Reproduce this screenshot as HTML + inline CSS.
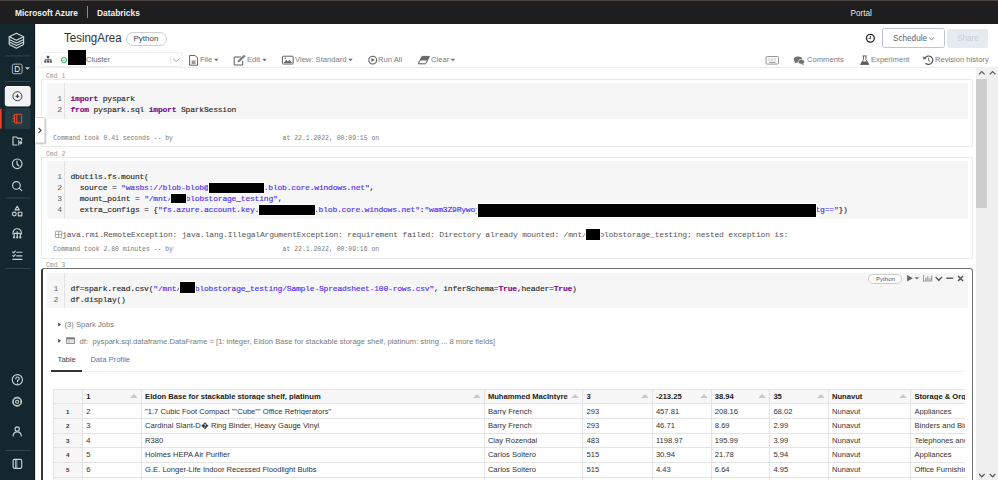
<!DOCTYPE html>
<html><head><meta charset="utf-8">
<style>
*{margin:0;padding:0;box-sizing:border-box}
html,body{width:998px;height:480px;overflow:hidden;background:#fff;font-family:"Liberation Sans",sans-serif;color:#333}
.a{position:absolute;white-space:pre}
.m{font-family:"Liberation Mono",monospace}
#top{position:absolute;left:0;top:0;width:998px;height:24px;background:#1e1e1e;border-top:1px solid #4a4540}
#side{position:absolute;left:0;top:24px;width:35px;height:456px;background:#15272e;border-right:1px solid #0c1b21}
.sep{position:absolute;left:5px;width:26px;height:1px;background:#34454c}
.tb{color:#7c7c7c;font-size:8.1px;line-height:8.1px;transform:scaleX(0.94);transform-origin:0 0}
.cell{position:absolute;left:41px;width:931.5px;border:1px solid #e9e9e9;border-radius:2px;background:#fff}
.code{position:absolute;left:46.5px;width:921.5px;background:#f6f6f6}
.gut{position:absolute;left:64px;width:1px;background:#e2e2e2}
.ln{color:#666;font-size:8px;line-height:8px}
.cd{color:#2a2a2a;font-size:8px;line-height:8px;letter-spacing:-0.2px;-webkit-text-stroke:0.15px currentColor}
.kw{color:#7a0f87;font-weight:bold}
.st{color:#4f30f2}
.bk{background:#000;position:absolute;box-shadow:0 0 0 0.9px #fff}
.cmd{color:#999;font-size:6.45px;line-height:6.45px}
.took{color:#7a7a7a;font-size:6.45px;line-height:6.45px}
</style></head><body>
<div id="top">
  <div class="a" style="left:15px;top:8.2px;font-size:8.4px;line-height:8.4px;font-weight:bold;color:#f2f2f2">Microsoft Azure</div>
  <div class="a" style="left:87px;top:5px;width:1px;height:12px;background:#8a8a8a"></div>
  <div class="a" style="left:97px;top:8.2px;font-size:8.4px;line-height:8.4px;font-weight:bold;color:#f2f2f2">Databricks</div>
  <div class="a" style="left:850.5px;top:8.5px;font-size:8.2px;line-height:8.2px;color:#e8e8e8">Portal</div>
</div>
<div id="side"></div>
<svg class="a" style="left:0;top:0" width="35" height="480" viewBox="0 0 35 480">
 <g fill="none" stroke="#d2d7da" stroke-width="1.15" stroke-linejoin="round">
  <!-- databricks logo -->
  <path d="M16.4 33.2 L23.6 36.7 L16.4 40.2 L9.2 36.7 Z"/>
  <path d="M9.2 39.4 L16.4 42.9 L23.6 39.4"/>
  <path d="M9.2 42 L16.4 45.5 L23.6 42"/>
  <path d="M9.2 44.6 L16.4 48.2 L23.6 44.6"/>
  <path d="M9.2 36.7 V44.6 M23.6 36.7 V44.6"/>
 </g>
 <rect x="5" y="55.5" width="25.5" height="0.8" fill="#3b4c53"/>
 <rect x="5" y="81" width="25.5" height="0.8" fill="#3b4c53"/>
 <rect x="5" y="197.6" width="25.5" height="0.8" fill="#3b4c53"/>
 <rect x="5" y="268" width="25.5" height="0.8" fill="#3b4c53"/>
 <rect x="5" y="450" width="25.5" height="0.8" fill="#3b4c53"/>
 <!-- D box -->
 <rect x="12.3" y="64.1" width="9.8" height="9.6" rx="1.6" fill="none" stroke="#b9c2c6" stroke-width="0.9"/>
 <text x="14.3" y="72.2" font-family="Liberation Sans" font-size="8.2" fill="#f4f4f4">D</text>
 <path d="M25 67.2 H30 L27.5 69.8 Z" fill="#c9d0d3"/>
 <!-- + button -->
 <rect x="5.3" y="86.5" width="24.8" height="19.4" rx="1.8" fill="#f1f2f4" stroke="#fff" stroke-width="1"/>
 <circle cx="17.4" cy="96.2" r="4.5" fill="none" stroke="#2c2c2c" stroke-width="0.9"/>
 <path d="M17.4 94.3 V98.1 M15.5 96.2 H19.3" stroke="#2c2c2c" stroke-width="1.1"/>
 <!-- active notebook -->
 <rect x="4.8" y="108.3" width="25.8" height="20.6" rx="2" fill="#233a42"/>
 <rect x="0" y="108.8" width="1.6" height="19.8" fill="#e8452b"/>
 <g fill="none" stroke="#e8452b" stroke-width="1.1">
  <rect x="14.6" y="114.3" width="7" height="8.6" rx="0.8"/>
  <path d="M12.6 116 H14.6 M12.6 118.6 H14.6 M12.6 121.2 H14.6 M16.8 114.3 V122.9"/>
 </g>
 <g fill="none" stroke="#c9d0d3" stroke-width="1.15" stroke-linecap="round" stroke-linejoin="round">
  <!-- folder -->
  <path d="M13 137 H16.6 L17.8 138.4 H21.6 V140.2 M13 137 V145 H17"/>
  <path d="M18.8 140.6 V144.8 M18.8 142.7 H21.8 M20.6 141.4 L21.8 142.7 L20.6 144"/>
  <!-- clock -->
  <circle cx="17.2" cy="163.8" r="4.8"/>
  <path d="M17 161 V164.2 L19 166"/>
  <!-- search -->
  <circle cx="16.4" cy="185.4" r="3.8"/>
  <path d="M19.2 188.2 L21.8 190.6"/>
  <!-- shapes -->
  <path d="M17.2 206.2 L19.3 209.8 H15.1 Z"/>
  <circle cx="14.3" cy="214" r="1.9"/>
  <rect x="18.3" y="212.2" width="3.5" height="3.6"/>
  <!-- cluster -->
  <path d="M12.9 234 Q12.9 228.7 17.2 228.7 Q21.5 228.7 21.5 234"/>
  <path d="M14.1 233.4 H20.3 M14.1 233.4 V236.4 M17.2 231.6 V236.4 M20.3 233.4 V236.4"/>
  <circle cx="14.1" cy="237.4" r="1.1" fill="#c9d0d3" stroke="none"/>
  <circle cx="17.2" cy="237.4" r="1.1" fill="#c9d0d3" stroke="none"/>
  <circle cx="20.3" cy="237.4" r="1.1" fill="#c9d0d3" stroke="none"/>
  <!-- checklist -->
  <path d="M12.8 252 L13.7 252.9 L15.3 251 M16.8 252.2 H22 M12.8 255.6 L13.7 256.5 L15.3 254.6 M16.8 255.8 H22 M12.8 259.3 H22"/>
  <!-- help -->
  <circle cx="17.35" cy="379.7" r="5.1"/>
  <path d="M15.8 378.8 Q15.8 377 17.5 377 Q19.2 377 19.2 378.7 Q19.2 379.8 17.5 380.6 V381.6"/>
  <!-- gear -->
  <circle cx="17.1" cy="401.7" r="3.9"/>
  <circle cx="17.1" cy="401.7" r="4.6" stroke-dasharray="1.6 0.8" stroke-width="0.8"/>
  <circle cx="17.1" cy="401.7" r="1.5"/>
  <!-- person -->
  <circle cx="17.2" cy="428.9" r="2.1"/>
  <path d="M13.2 436 Q13.2 431.8 17.2 431.8 Q21.2 431.8 21.2 436"/>
  <!-- panel -->
  <rect x="13.1" y="459.4" width="8.6" height="8.9" rx="1.2"/>
  <path d="M15.4 459.2 V468.4 M16.8 459.2 V468.4" stroke-width="0.8"/>
 </g>
 <circle cx="17.4" cy="380.2" r="0.1" fill="#fff"/>
 <circle cx="17.5" cy="383.3" r="0.55" fill="#c9d0d3"/>
</svg>

<div class="a" style="left:35px;top:24px;width:1px;height:456px;background:#e4e4e4"></div>
<!-- title row -->
<div class="a" style="left:64.2px;top:31.6px;font-size:12.3px;line-height:12.3px;color:#333;transform:scaleX(0.935);transform-origin:0 0">TesingArea</div>
<div class="a" style="left:126px;top:31.5px;width:41px;height:14px;border:1px solid #cfcfcf;border-radius:7px"></div>
<div class="a" style="left:133.5px;top:34.5px;font-size:8px;line-height:8px;color:#444">Python</div>

<!-- toolbar -->
<div class="a" style="left:41px;top:52.3px;width:142px;height:14.5px;border:1px solid #ededed;border-radius:3px"></div>
<svg class="a" style="left:0;top:0" width="998" height="70" viewBox="0 0 998 70">
 <!-- cluster hierarchy icon -->
 <g fill="#4a4a4a">
  <rect x="46.8" y="55.8" width="2.4" height="2.2"/>
  <rect x="47.7" y="57.8" width="0.7" height="1.6"/>
  <rect x="45" y="59" width="6.4" height="0.7"/>
  <rect x="44.2" y="60.4" width="2.2" height="2.2"/>
  <rect x="46.9" y="60.4" width="2.2" height="2.2"/>
  <rect x="49.6" y="60.4" width="2.2" height="2.2"/>
 </g>
 <circle cx="64" cy="60" r="2.5" fill="none" stroke="#3cc06a" stroke-width="1.1"/>
 <path d="M62.9 60 L63.7 60.8 L65.2 59.3" fill="none" stroke="#3cc06a" stroke-width="0.9"/>
 <rect x="170.3" y="57.2" width="0.6" height="5.8" fill="#d0d0d0"/>
 <path d="M173 58.6 L176.2 61.6 L179.4 58.6" fill="none" stroke="#9a9a9a" stroke-width="0.9"/>
 <g fill="none" stroke="#5e5e5e" stroke-width="1">
  <!-- file -->
  <path d="M189.6 55.4 H195 L197.6 58 V65.2 H189.6 Z"/>
  <rect x="191.6" y="60.4" width="4" height="3.6" fill="#9a9a9a" stroke="none"/>
  <!-- edit -->
  <path d="M241.2 57 H234.2 V65 H242.6 V60.8"/>
  <path d="M237.6 62.2 L238 60.6 L244.2 54.8 L245.6 56.2 L239.4 62 Z" fill="#7a7a7a" stroke="none"/>
  <!-- view -->
  <rect x="282.4" y="56.2" width="10.8" height="7.8" rx="0.8"/>
  <path d="M283.6 63 L286.2 59.8 L288 61.4 L289.6 59.8 L292.2 63 Z" fill="#6a6a6a" stroke="none"/>
  <circle cx="285.2" cy="58.2" r="0.8" fill="#6a6a6a" stroke="none"/>
  <!-- run all -->
  <circle cx="372.7" cy="60.1" r="3.9" stroke-width="1.1"/>
  <path d="M371.4 58.1 L374.8 60.1 L371.4 62.1 Z" fill="#6a6a6a" stroke="none"/>
  <!-- clear -->
  <path d="M422 56.4 H429.4 L425.6 63.8 H418.2 Z"/>
  <path d="M422 56.4 H429.4 L427.2 60.6 H419.8 Z" fill="#6a6a6a" stroke="none"/>
  <!-- keyboard -->
  <rect x="766" y="56.5" width="12.6" height="7.6" rx="1.2" stroke="#8c8c8c" stroke-width="0.9" fill="#fafafa"/>
  <path d="M768.2 59 H776.6" stroke="#9a9a9a" stroke-width="0.8" stroke-dasharray="0.7 0.7"/>
  <path d="M768.2 60.6 H776.6" stroke="#b0b0b0" stroke-width="0.7" stroke-dasharray="0.7 0.7"/>
  <path d="M769.2 62.4 H775.6" stroke="#808080" stroke-width="0.8"/>
 </g>
 <g fill="#6f6f6f">
  <path d="M214 58.8 H218.6 L216.3 61.2 Z"/>
  <path d="M262.2 58.8 H266.8 L264.5 61.2 Z"/>
  <path d="M348.2 58.8 H352.8 L350.5 61.2 Z"/>
  <path d="M450.6 58.8 H455.2 L452.9 61.2 Z"/>
  <!-- comments -->
  <ellipse cx="798" cy="59.4" rx="4.2" ry="3"/>
  <path d="M795.4 61.6 L794.2 63.4 L797.6 62.2 Z"/>
  <ellipse cx="801.4" cy="61.8" rx="3.2" ry="2.4" stroke="#fff" stroke-width="0.6"/>
  <path d="M803 63.6 L804.4 65.2 L801.6 64 Z"/>
  <!-- experiment flask -->
  <path d="M862.6 55.9 H866.8 M863.5 56 V59.6 L860.6 64.4 H868.8 L865.9 59.6 V56" fill="none" stroke="#5a5a5a" stroke-width="0.9" stroke-linejoin="round"/>
  <path d="M862.2 61.6 H867.2 L868.8 64.4 H860.6 Z" fill="#5a5a5a"/>
 </g>
 <!-- revision history -->
 <g fill="none" stroke="#555" stroke-width="1.2">
  <path d="M925 58 A4.2 4.2 0 1 1 925.6 63.2"/>
  <path d="M928.6 57.8 V60.4 L930.4 61.6" stroke-width="0.9"/>
 </g>
 <path d="M923.2 56.2 L926.6 58.8 L923.2 59.6 Z" fill="#555"/>
 <!-- clock (title row) -->
 <circle cx="870.4" cy="38.3" r="3.9" fill="none" stroke="#222" stroke-width="1.3"/>
 <path d="M870.4 36 V38.6 H868.6" fill="none" stroke="#222" stroke-width="0.9"/>
 <!-- schedule chevron -->
 <path d="M929.4 37.8 L931.6 39.8 L933.8 37.8" fill="none" stroke="#666" stroke-width="0.9"/>
</svg>
<div class="a" style="left:67.5px;top:50.4px;width:18px;height:15px;background:#000"></div>
<div class="a tb" style="left:86px;top:55.8px;color:#666">Cluster</div>
<div class="a tb" style="left:199.6px;top:55.8px">File</div>
<div class="a tb" style="left:247.4px;top:55.8px">Edit</div>
<div class="a tb" style="left:294.9px;top:55.8px">View: Standard</div>
<div class="a tb" style="left:378.3px;top:55.8px">Run All</div>
<div class="a tb" style="left:431.2px;top:55.8px">Clear</div>
<div class="a tb" style="left:806.6px;top:55.8px">Comments</div>
<div class="a tb" style="left:870.6px;top:55.8px">Experiment</div>
<div class="a tb" style="left:935px;top:55.8px">Revision history</div>
<div class="a" style="left:882.2px;top:28.3px;width:62.4px;height:19.3px;border:1px solid #bcc6d0;border-radius:2.5px"></div>
<div class="a" style="left:892.9px;top:34.3px;font-size:8.6px;line-height:8.6px;color:#5b6570;transform:scaleX(0.95);transform-origin:0 0">Schedule</div>
<div class="a" style="left:946.7px;top:29px;width:41.6px;height:18.6px;background:#e6ebf0;border-radius:2.5px"></div>
<div class="a" style="left:957.1px;top:34.3px;font-size:8.6px;line-height:8.6px;color:#c8d0d8;transform:scaleX(0.95);transform-origin:0 0">Share</div>
<!-- toolbar bottom line -->
<div class="a" style="left:35px;top:67px;width:941px;height:1px;background:#ececec"></div>

<!-- scrollbar -->
<div class="a" style="left:976px;top:67px;width:22px;height:413px;background:#f0f0f0"></div>
<div class="a" style="left:976px;top:79px;width:11px;height:129px;background:#cdcdcd"></div>

<!-- cells -->
<div class="a cmd m" style="left:46px;top:73.9px">Cmd 1</div>
<div class="cell" style="top:79px;height:67.5px"></div>
<div class="code" style="top:82.5px;height:36px"></div>
<div class="gut" style="top:82.5px;height:36px"></div>

<div class="a cmd m" style="left:46px;top:152.4px">Cmd 2</div>
<div class="cell" style="top:157px;height:101.5px"></div>
<div class="code" style="top:160.5px;height:58.5px"></div>
<div class="gut" style="top:160.5px;height:58.5px"></div>

<div class="a cmd m" style="left:46px;top:263.4px">Cmd 3</div>
<div class="cell" style="top:268px;height:240px;border:1.2px solid #707070;border-left:2.2px solid #3a3a3a;border-radius:3px"></div>
<div class="code" style="top:272.5px;height:35.6px"></div>
<div class="gut" style="top:272.5px;height:35.6px"></div>

<!-- cell contents -->
<div class="a m ln" style="left:57.3px;top:94.77px;">1</div>
<div class="a m ln" style="left:57.3px;top:106.27px;">2</div>
<div class="a m cd" style="left:70.5px;top:94.77px;"><span class="kw">import</span> pyspark</div>
<div class="a m cd" style="left:70.5px;top:106.27px;"><span class="kw">from</span> pyspark.sql <span class="kw">import</span> SparkSession</div>
<div class="a m took" style="left:53.2px;top:135.56px;">Command took 0.41 seconds -- by</div>
<div class="a m took" style="left:282.6px;top:135.56px;">at 22.1.2022, 00:09:15 on</div>
<div class="a m ln" style="left:57.3px;top:173.47px;">1</div>
<div class="a m ln" style="left:57.3px;top:184.07px;">2</div>
<div class="a m ln" style="left:57.3px;top:195.07px;">3</div>
<div class="a m ln" style="left:57.3px;top:206.47px;">4</div>
<div class="a m cd" style="left:70.5px;top:173.47px;">dbutils.fs.mount(</div>
<div class="a m cd" style="left:70.5px;top:184.07px;">  source = <span class="st">"wasbs://blob-blob@</span></div>
<div class="a m cd" style="left:263.7px;top:184.07px;"><span class="st">.blob.core.windows.net"</span>,</div>
<div class="a m cd" style="left:70.5px;top:195.07px;">  mount_point = <span class="st">"/mnt/</span></div>
<div class="a m cd" style="left:185.6px;top:195.07px;"><span class="st">blobstorage_testing"</span>,</div>
<div class="a m cd" style="left:70.5px;top:206.47px;">  extra_configs = {<span class="st">"fs.azure.account.key.</span></div>
<div class="a m cd" style="left:314.0px;top:206.47px;"><span class="st">.blob.core.windows.net"</span>:<span class="st">"wam3Z9Rywoj</span></div>
<div class="a m cd" style="left:815.5px;top:206.47px;"><span class="st">tg=="</span>})</div>
<div class="bk" style="left:209.3px;top:183.1px;width:54.5px;height:10.2px"></div>
<div class="bk" style="left:171.2px;top:193.7px;width:15.1px;height:9.3px"></div>
<div class="bk" style="left:259.2px;top:205.2px;width:56.3px;height:9.7px"></div>
<div class="bk" style="left:477.6px;top:203.5px;width:338.4px;height:13.3px"></div>
<div class="a m cd" style="left:62.1px;top:230.97px;color:#555;-webkit-text-stroke:0">java.rmi.RemoteException: java.lang.IllegalArgumentException: requirement failed: Directory already mounted: /mnt/</div>
<div class="a m cd" style="left:599.5px;top:230.97px;color:#555;-webkit-text-stroke:0">blobstorage_testing; nested exception is:</div>
<div class="bk" style="left:585.9px;top:229.3px;width:14.2px;height:10.5px"></div>
<div class="a m took" style="left:53.2px;top:246.76px;">Command took 2.80 minutes -- by</div>
<div class="a m took" style="left:282.6px;top:246.76px;">at 22.1.2022, 00:09:16 on</div>
<div class="a m ln" style="left:53.4px;top:285.37px;">1</div>
<div class="a m ln" style="left:53.4px;top:296.32px;">2</div>
<div class="a m cd" style="left:70.5px;top:285.37px;">df=spark.read.csv(<span class="st">"/mnt/</span></div>
<div class="a m cd" style="left:194.8px;top:285.37px;"><span class="st">blobstorage_testing/Sample-Spreadsheet-100-rows.csv"</span>, inferSchema=<span class="kw">True</span>,header=<span class="kw">True</span>)</div>
<div class="a m cd" style="left:70.5px;top:296.32px;">df.display()</div>
<div class="bk" style="left:180px;top:282px;width:14.8px;height:11.0px"></div>
<!-- part3 -->
<div class="a" style="left:35px;top:117.2px;width:10.00px;height:25.80px;background:#fff;border:1px solid #e2e2e2;border-left:none;box-shadow:1px 1px 1.5px rgba(0,0,0,0.25)"></div>
<svg class="a" style="left:0;top:0" width="998" height="480" viewBox="0 0 998 480">
 <path d="M38.6 127.8 L41 130.4 L38.6 133" fill="none" stroke="#333" stroke-width="1.1"/>
 <path d="M979 74.4 L981.8 71.6 L984.6 74.4 M989.8 74.4 L992.6 71.6 L995.4 74.4" fill="none" stroke="#555" stroke-width="1.2"/>
 <path d="M979 474 L981.8 476.8 L984.6 474 M989.8 474 L992.6 476.8 L995.4 474" fill="none" stroke="#555" stroke-width="1.2"/>
 <rect x="55.4" y="231.2" width="6.4" height="6.4" rx="1" fill="none" stroke="#8a8a8a" stroke-width="0.8"/><path d="M58.6 231.6 V237.2 M55.8 234.4 H61.4" stroke="#8a8a8a" stroke-width="0.7"/>
 <path d="M907.1 275 L912.9 278.2 L907.1 281.4 Z" fill="#666"/>
 <path d="M914.6 277.2 H919 L916.8 279.6 Z" fill="#666"/>
 <g fill="#888"><rect x="923.2" y="275" width="0.8" height="6.4"/><rect x="923.2" y="280.6" width="9" height="0.8"/><rect x="925.4" y="277.6" width="1" height="3"/><rect x="927.4" y="276.2" width="1" height="4.4"/><rect x="929.4" y="278.2" width="1" height="2.4"/><rect x="931.2" y="275.4" width="1" height="5.2"/></g>
 <path d="M935.6 277 L938.8 280.2 L942 277" fill="none" stroke="#555" stroke-width="1.4"/>
 <rect x="946.3" y="277.5" width="6.9" height="1.4" fill="#555"/>
 <path d="M958 276 L963 281 M963 276 L958 281" stroke="#555" stroke-width="1.5"/>
 <path d="M58.2 322.6 L61 324.6 L58.2 326.6 Z" fill="#444"/>
 <path d="M58.2 338.8 L61 340.8 L58.2 342.8 Z" fill="#444"/>
 <rect x="66.6" y="337.8" width="7.8" height="5.6" fill="none" stroke="#777" stroke-width="0.8"/>
 <rect x="66.6" y="337.8" width="7.8" height="1.6" fill="#777"/>
 <path d="M66.6 340.8 H74.4 M66.6 342 H74.4 M69 339.4 V343.4" stroke="#aaa" stroke-width="0.5"/>
</svg>
<div class="a" style="left:868.2px;top:273.5px;width:34.10px;height:10.80px;border:0.8px solid #ccc;border-radius:6px;background:#fff"></div>
<div class="a" style="left:876px;top:276.44px;font-size:6.1px;line-height:6.1px;color:#555;">Python</div>
<div class="a" style="left:64.6px;top:320.87px;font-size:7.6px;line-height:7.6px;color:#777;">(3) Spark Jobs</div>
<div class="a" style="left:79.6px;top:337.77px;font-size:7.6px;line-height:7.6px;color:#7a7a7a;">df:</div>
<div class="a" style="left:92.6px;top:337.77px;font-size:7.6px;line-height:7.6px;color:#7a7a7a;">pyspark.sql.dataframe.DataFrame = [1: integer, Eldon Base for stackable storage shelf, platinum: string ... 8 more fields]</div>
<div class="a" style="left:57.6px;top:355.77px;font-size:7.6px;line-height:7.6px;color:#444;">Table</div>
<div class="a" style="left:90.4px;top:355.77px;font-size:7.6px;line-height:7.6px;color:#3b7dc4;">Data Profile</div>
<div class="a" style="left:50.8px;top:371px;width:913.20px;height:1.00px;background:#eee"></div>
<div class="a" style="left:50.8px;top:369.8px;width:31.70px;height:2.00px;background:#333"></div>
<div class="a" style="left:53px;top:388.8px;width:912px;height:92px;overflow:hidden">
<div class="a" style="left:0px;top:0.6px;width:1000.00px;height:14.40px;background:#f7f7f7"></div>
<div class="a" style="left:0.6px;top:0.6px;width:29.10px;height:99.40px;background:#f7f7f7"></div>
<div class="a" style="left:0px;top:0.0999999999999659px;width:1000.00px;height:1.00px;background:#e4e4e4"></div>
<div class="a" style="left:0px;top:14.5px;width:1000.00px;height:1.00px;background:#e4e4e4"></div>
<div class="a" style="left:0px;top:29.399999999999977px;width:1000.00px;height:1.00px;background:#e4e4e4"></div>
<div class="a" style="left:0px;top:44.19999999999999px;width:1000.00px;height:1.00px;background:#e4e4e4"></div>
<div class="a" style="left:0px;top:58.69999999999999px;width:1000.00px;height:1.00px;background:#e4e4e4"></div>
<div class="a" style="left:0px;top:73.30000000000001px;width:1000.00px;height:1.00px;background:#e4e4e4"></div>
<div class="a" style="left:0px;top:87.80000000000001px;width:1000.00px;height:1.00px;background:#e4e4e4"></div>
<div class="a" style="left:0px;top:102.39999999999998px;width:1000.00px;height:1.00px;background:#e4e4e4"></div>
<div class="a" style="left:0.10000000000000142px;top:0px;width:1.00px;height:100.00px;background:#e4e4e4"></div>
<div class="a" style="left:29.200000000000003px;top:0px;width:1.00px;height:100.00px;background:#e4e4e4"></div>
<div class="a" style="left:88.0px;top:0px;width:1.00px;height:100.00px;background:#e4e4e4"></div>
<div class="a" style="left:430.8px;top:0px;width:1.00px;height:100.00px;background:#e4e4e4"></div>
<div class="a" style="left:529.4px;top:0px;width:1.00px;height:100.00px;background:#e4e4e4"></div>
<div class="a" style="left:598.8px;top:0px;width:1.00px;height:100.00px;background:#e4e4e4"></div>
<div class="a" style="left:657.7px;top:0px;width:1.00px;height:100.00px;background:#e4e4e4"></div>
<div class="a" style="left:716.3px;top:0px;width:1.00px;height:100.00px;background:#e4e4e4"></div>
<div class="a" style="left:774.9px;top:0px;width:1.00px;height:100.00px;background:#e4e4e4"></div>
<div class="a" style="left:857.3px;top:0px;width:1.00px;height:100.00px;background:#e4e4e4"></div>
</div>
<div class="a" style="left:53px;top:388.8px;width:912px;height:92px;overflow:hidden">
<div class="a" style="left:33.300000000000004px;top:4.07px;font-size:7.6px;line-height:7.6px;color:#222;font-weight:bold;width:55.199999999999996px;overflow:hidden">1</div>
<svg class="a" style="left:76.9px;top:5.1px" width="8" height="4.2" viewBox="0 0 8 4.2"><path d="M0 4.2 L4 0 L8 4.2 Z" fill="#c8c8c8"/></svg>
<div class="a" style="left:92.1px;top:4.07px;font-size:7.6px;line-height:7.6px;color:#222;font-weight:bold;width:339.2px;overflow:hidden">Eldon Base for stackable storage shelf, platinum</div>
<svg class="a" style="left:419.7px;top:5.1px" width="8" height="4.2" viewBox="0 0 8 4.2"><path d="M0 4.2 L4 0 L8 4.2 Z" fill="#c8c8c8"/></svg>
<div class="a" style="left:434.90000000000003px;top:4.07px;font-size:7.6px;line-height:7.6px;color:#222;font-weight:bold;width:94.99999999999997px;overflow:hidden">Muhammed MacIntyre</div>
<svg class="a" style="left:518.3px;top:5.1px" width="8" height="4.2" viewBox="0 0 8 4.2"><path d="M0 4.2 L4 0 L8 4.2 Z" fill="#c8c8c8"/></svg>
<div class="a" style="left:533.5px;top:4.07px;font-size:7.6px;line-height:7.6px;color:#222;font-weight:bold;width:65.79999999999998px;overflow:hidden">3</div>
<svg class="a" style="left:587.7px;top:5.1px" width="8" height="4.2" viewBox="0 0 8 4.2"><path d="M0 4.2 L4 0 L8 4.2 Z" fill="#c8c8c8"/></svg>
<div class="a" style="left:602.9px;top:4.07px;font-size:7.6px;line-height:7.6px;color:#222;font-weight:bold;width:55.30000000000009px;overflow:hidden">-213.25</div>
<svg class="a" style="left:646.6px;top:5.1px" width="8" height="4.2" viewBox="0 0 8 4.2"><path d="M0 4.2 L4 0 L8 4.2 Z" fill="#c8c8c8"/></svg>
<div class="a" style="left:661.8000000000001px;top:4.07px;font-size:7.6px;line-height:7.6px;color:#222;font-weight:bold;width:54.99999999999991px;overflow:hidden">38.94</div>
<svg class="a" style="left:705.2px;top:5.1px" width="8" height="4.2" viewBox="0 0 8 4.2"><path d="M0 4.2 L4 0 L8 4.2 Z" fill="#c8c8c8"/></svg>
<div class="a" style="left:720.4px;top:4.07px;font-size:7.6px;line-height:7.6px;color:#222;font-weight:bold;width:55.00000000000002px;overflow:hidden">35</div>
<svg class="a" style="left:763.8px;top:5.1px" width="8" height="4.2" viewBox="0 0 8 4.2"><path d="M0 4.2 L4 0 L8 4.2 Z" fill="#c8c8c8"/></svg>
<div class="a" style="left:779.0px;top:4.07px;font-size:7.6px;line-height:7.6px;color:#222;font-weight:bold;width:78.79999999999998px;overflow:hidden">Nunavut</div>
<svg class="a" style="left:846.2px;top:5.1px" width="8" height="4.2" viewBox="0 0 8 4.2"><path d="M0 4.2 L4 0 L8 4.2 Z" fill="#c8c8c8"/></svg>
<div class="a" style="left:861.4px;top:4.07px;font-size:7.6px;line-height:7.6px;color:#222;font-weight:bold;width:125.60000000000005px;overflow:hidden">Storage &amp; Organization</div>
<svg class="a" style="left:975.4px;top:5.1px" width="8" height="4.2" viewBox="0 0 8 4.2"><path d="M0 4.2 L4 0 L8 4.2 Z" fill="#c8c8c8"/></svg>
<div class="a" style="left:0px;top:19.75px;font-size:6.2px;line-height:6.2px;color:#333;font-weight:bold;width:29.700000000000003px;text-align:center">1</div>
<div class="a" style="left:33.300000000000004px;top:18.87px;font-size:7.6px;line-height:7.6px;color:#333;width:55.199999999999996px;overflow:hidden">2</div>
<div class="a" style="left:92.1px;top:18.87px;font-size:7.6px;line-height:7.6px;color:#333;width:339.2px;overflow:hidden">"1.7 Cubic Foot Compact ""Cube"" Office Refrigerators"</div>
<div class="a" style="left:434.90000000000003px;top:18.87px;font-size:7.6px;line-height:7.6px;color:#333;width:94.99999999999997px;overflow:hidden">Barry French</div>
<div class="a" style="left:533.5px;top:18.87px;font-size:7.6px;line-height:7.6px;color:#333;width:65.79999999999998px;overflow:hidden">293</div>
<div class="a" style="left:602.9px;top:18.87px;font-size:7.6px;line-height:7.6px;color:#333;width:55.30000000000009px;overflow:hidden">457.81</div>
<div class="a" style="left:661.8000000000001px;top:18.87px;font-size:7.6px;line-height:7.6px;color:#333;width:54.99999999999991px;overflow:hidden">208.16</div>
<div class="a" style="left:720.4px;top:18.87px;font-size:7.6px;line-height:7.6px;color:#333;width:55.00000000000002px;overflow:hidden">68.02</div>
<div class="a" style="left:779.0px;top:18.87px;font-size:7.6px;line-height:7.6px;color:#333;width:78.79999999999998px;overflow:hidden">Nunavut</div>
<div class="a" style="left:861.4px;top:18.87px;font-size:7.6px;line-height:7.6px;color:#333;width:125.60000000000005px;overflow:hidden">Appliances</div>
<div class="a" style="left:0px;top:34.25px;font-size:6.2px;line-height:6.2px;color:#333;font-weight:bold;width:29.700000000000003px;text-align:center">2</div>
<div class="a" style="left:33.300000000000004px;top:33.37px;font-size:7.6px;line-height:7.6px;color:#333;width:55.199999999999996px;overflow:hidden">3</div>
<div class="a" style="left:92.1px;top:33.37px;font-size:7.6px;line-height:7.6px;color:#333;width:339.2px;overflow:hidden">Cardinal Slant-D� Ring Binder, Heavy Gauge Vinyl</div>
<div class="a" style="left:434.90000000000003px;top:33.37px;font-size:7.6px;line-height:7.6px;color:#333;width:94.99999999999997px;overflow:hidden">Barry French</div>
<div class="a" style="left:533.5px;top:33.37px;font-size:7.6px;line-height:7.6px;color:#333;width:65.79999999999998px;overflow:hidden">293</div>
<div class="a" style="left:602.9px;top:33.37px;font-size:7.6px;line-height:7.6px;color:#333;width:55.30000000000009px;overflow:hidden">46.71</div>
<div class="a" style="left:661.8000000000001px;top:33.37px;font-size:7.6px;line-height:7.6px;color:#333;width:54.99999999999991px;overflow:hidden">8.69</div>
<div class="a" style="left:720.4px;top:33.37px;font-size:7.6px;line-height:7.6px;color:#333;width:55.00000000000002px;overflow:hidden">2.99</div>
<div class="a" style="left:779.0px;top:33.37px;font-size:7.6px;line-height:7.6px;color:#333;width:78.79999999999998px;overflow:hidden">Nunavut</div>
<div class="a" style="left:861.4px;top:33.37px;font-size:7.6px;line-height:7.6px;color:#333;width:125.60000000000005px;overflow:hidden">Binders and Binder Accessories</div>
<div class="a" style="left:0px;top:49.05px;font-size:6.2px;line-height:6.2px;color:#333;font-weight:bold;width:29.700000000000003px;text-align:center">3</div>
<div class="a" style="left:33.300000000000004px;top:48.17px;font-size:7.6px;line-height:7.6px;color:#333;width:55.199999999999996px;overflow:hidden">4</div>
<div class="a" style="left:92.1px;top:48.17px;font-size:7.6px;line-height:7.6px;color:#333;width:339.2px;overflow:hidden">R380</div>
<div class="a" style="left:434.90000000000003px;top:48.17px;font-size:7.6px;line-height:7.6px;color:#333;width:94.99999999999997px;overflow:hidden">Clay Rozendal</div>
<div class="a" style="left:533.5px;top:48.17px;font-size:7.6px;line-height:7.6px;color:#333;width:65.79999999999998px;overflow:hidden">483</div>
<div class="a" style="left:602.9px;top:48.17px;font-size:7.6px;line-height:7.6px;color:#333;width:55.30000000000009px;overflow:hidden">1198.97</div>
<div class="a" style="left:661.8000000000001px;top:48.17px;font-size:7.6px;line-height:7.6px;color:#333;width:54.99999999999991px;overflow:hidden">195.99</div>
<div class="a" style="left:720.4px;top:48.17px;font-size:7.6px;line-height:7.6px;color:#333;width:55.00000000000002px;overflow:hidden">3.99</div>
<div class="a" style="left:779.0px;top:48.17px;font-size:7.6px;line-height:7.6px;color:#333;width:78.79999999999998px;overflow:hidden">Nunavut</div>
<div class="a" style="left:861.4px;top:48.17px;font-size:7.6px;line-height:7.6px;color:#333;width:125.60000000000005px;overflow:hidden">Telephones and Communication</div>
<div class="a" style="left:0px;top:63.55px;font-size:6.2px;line-height:6.2px;color:#333;font-weight:bold;width:29.700000000000003px;text-align:center">4</div>
<div class="a" style="left:33.300000000000004px;top:62.67px;font-size:7.6px;line-height:7.6px;color:#333;width:55.199999999999996px;overflow:hidden">5</div>
<div class="a" style="left:92.1px;top:62.67px;font-size:7.6px;line-height:7.6px;color:#333;width:339.2px;overflow:hidden">Holmes HEPA Air Purifier</div>
<div class="a" style="left:434.90000000000003px;top:62.67px;font-size:7.6px;line-height:7.6px;color:#333;width:94.99999999999997px;overflow:hidden">Carlos Soltero</div>
<div class="a" style="left:533.5px;top:62.67px;font-size:7.6px;line-height:7.6px;color:#333;width:65.79999999999998px;overflow:hidden">515</div>
<div class="a" style="left:602.9px;top:62.67px;font-size:7.6px;line-height:7.6px;color:#333;width:55.30000000000009px;overflow:hidden">30.94</div>
<div class="a" style="left:661.8000000000001px;top:62.67px;font-size:7.6px;line-height:7.6px;color:#333;width:54.99999999999991px;overflow:hidden">21.78</div>
<div class="a" style="left:720.4px;top:62.67px;font-size:7.6px;line-height:7.6px;color:#333;width:55.00000000000002px;overflow:hidden">5.94</div>
<div class="a" style="left:779.0px;top:62.67px;font-size:7.6px;line-height:7.6px;color:#333;width:78.79999999999998px;overflow:hidden">Nunavut</div>
<div class="a" style="left:861.4px;top:62.67px;font-size:7.6px;line-height:7.6px;color:#333;width:125.60000000000005px;overflow:hidden">Appliances</div>
<div class="a" style="left:0px;top:78.35px;font-size:6.2px;line-height:6.2px;color:#333;font-weight:bold;width:29.700000000000003px;text-align:center">5</div>
<div class="a" style="left:33.300000000000004px;top:77.47px;font-size:7.6px;line-height:7.6px;color:#333;width:55.199999999999996px;overflow:hidden">6</div>
<div class="a" style="left:92.1px;top:77.47px;font-size:7.6px;line-height:7.6px;color:#333;width:339.2px;overflow:hidden">G.E. Longer-Life Indoor Recessed Floodlight Bulbs</div>
<div class="a" style="left:434.90000000000003px;top:77.47px;font-size:7.6px;line-height:7.6px;color:#333;width:94.99999999999997px;overflow:hidden">Carlos Soltero</div>
<div class="a" style="left:533.5px;top:77.47px;font-size:7.6px;line-height:7.6px;color:#333;width:65.79999999999998px;overflow:hidden">515</div>
<div class="a" style="left:602.9px;top:77.47px;font-size:7.6px;line-height:7.6px;color:#333;width:55.30000000000009px;overflow:hidden">4.43</div>
<div class="a" style="left:661.8000000000001px;top:77.47px;font-size:7.6px;line-height:7.6px;color:#333;width:54.99999999999991px;overflow:hidden">6.64</div>
<div class="a" style="left:720.4px;top:77.47px;font-size:7.6px;line-height:7.6px;color:#333;width:55.00000000000002px;overflow:hidden">4.95</div>
<div class="a" style="left:779.0px;top:77.47px;font-size:7.6px;line-height:7.6px;color:#333;width:78.79999999999998px;overflow:hidden">Nunavut</div>
<div class="a" style="left:861.4px;top:77.47px;font-size:7.6px;line-height:7.6px;color:#333;width:125.60000000000005px;overflow:hidden">Office Furnishings</div>
<div class="a" style="left:0px;top:92.95px;font-size:6.2px;line-height:6.2px;color:#333;font-weight:bold;width:29.700000000000003px;text-align:center">6</div>
<div class="a" style="left:33.300000000000004px;top:92.07px;font-size:7.6px;line-height:7.6px;color:#333;width:55.199999999999996px;overflow:hidden">7</div>
<div class="a" style="left:92.1px;top:92.07px;font-size:7.6px;line-height:7.6px;color:#333;width:339.2px;overflow:hidden">Angle-D Binders with Locking Rings, Label Holders</div>
<div class="a" style="left:434.90000000000003px;top:92.07px;font-size:7.6px;line-height:7.6px;color:#333;width:94.99999999999997px;overflow:hidden">Carl Jackson</div>
<div class="a" style="left:533.5px;top:92.07px;font-size:7.6px;line-height:7.6px;color:#333;width:65.79999999999998px;overflow:hidden">613</div>
<div class="a" style="left:602.9px;top:92.07px;font-size:7.6px;line-height:7.6px;color:#333;width:55.30000000000009px;overflow:hidden">-54.04</div>
<div class="a" style="left:661.8000000000001px;top:92.07px;font-size:7.6px;line-height:7.6px;color:#333;width:54.99999999999991px;overflow:hidden">7.3</div>
<div class="a" style="left:720.4px;top:92.07px;font-size:7.6px;line-height:7.6px;color:#333;width:55.00000000000002px;overflow:hidden">7.72</div>
<div class="a" style="left:779.0px;top:92.07px;font-size:7.6px;line-height:7.6px;color:#333;width:78.79999999999998px;overflow:hidden">Nunavut</div>
<div class="a" style="left:861.4px;top:92.07px;font-size:7.6px;line-height:7.6px;color:#333;width:125.60000000000005px;overflow:hidden">Binders and Binder Accessories</div>
</div>
</body></html>
